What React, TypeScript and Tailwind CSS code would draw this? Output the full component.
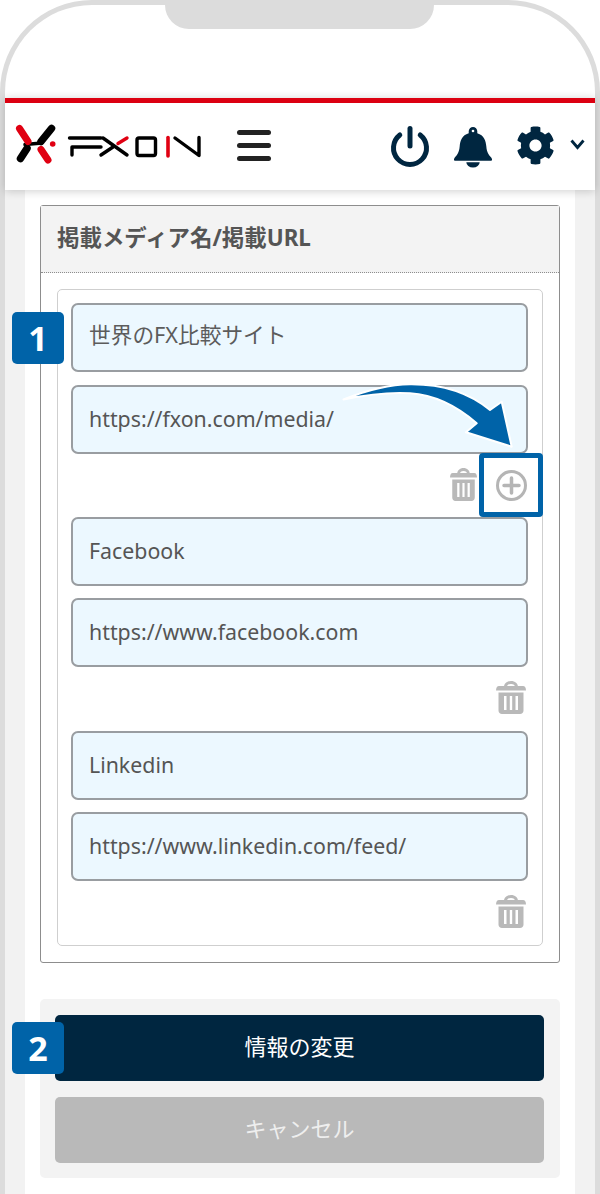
import { FaCog } from "react-icons/fa";

const font = { fontFamily: '"Noto Sans", "Noto Sans CJK JP", sans-serif' };

function Field({ value, cjk }: { value: string; cjk?: boolean }) {
  return (
    <div
      className={
        cjk
          ? "flex h-[69px] items-center rounded-[7px] border-2 border-[#999da1] bg-[#ecf8ff] pb-[5px] pl-[16px] text-[21.7px] text-[#5c5c5c]"
          : "flex h-[69px] items-center rounded-[7px] border-2 border-[#999da1] bg-[#ecf8ff] pb-[2px] pl-[16px] text-[21.33px] text-[#555]"
      }
    >
      {value}
    </div>
  );
}

function Trash({ small }: { small?: boolean }) {
  return (
    <svg
      className={small ? "-mt-[3px] h-[33px] w-[27px]" : "-mt-[3px] h-[33px] w-[30px]"}
      viewBox="0 0 30 33"
      preserveAspectRatio="none"
      fill="#b9b9b9"
    >
      <path d="M8 6 C8 2.5 11 0 15 0 C19 0 22 2.5 22 6 L19 6 C19 4 17.5 3 15 3 C12.5 3 11 4 11 6 Z" />
      <path d="M3 5 H27 C29 5 30 7 30 9.5 H0 C0 7 1 5 3 5 Z" />
      <path
        fillRule="evenodd"
        d="M2.5 11.5 H27.5 V29.5 C27.5 31.5 26 33 24 33 H6 C4 33 2.5 31.5 2.5 29.5 Z M8 15 V29 H10.5 V15 Z M13.8 15 V29 H16.2 V15 Z M19.5 15 V29 H22 V15 Z"
      />
    </svg>
  );
}

function Badge({ n, className }: { n: string; className: string }) {
  return (
    <div className={`absolute flex h-[52px] w-[52px] items-center justify-center rounded-[5px] bg-[#0063a8] text-[34px] font-bold text-white ${className}`}>
      {n}
    </div>
  );
}

function Logo() {
  return (
    <svg width="186" height="42" viewBox="0 0 186 42" fill="none" strokeLinecap="round" strokeLinejoin="round">
      <path d="M36.5 5.5 L26 18.5" stroke="#000" strokeWidth="7.5" />
      <path d="M5.5 35.5 L12 25.5" stroke="#000" strokeWidth="7.5" />
      <path d="M10 21.5 L27 20" stroke="#000" strokeWidth="3.5" />
      <path d="M4.5 5.5 L13 18.5" stroke="#e00012" strokeWidth="7" />
      <path d="M26 26.5 L33 37" stroke="#e00012" strokeWidth="7" />
      <circle cx="37.7" cy="21" r="2.8" fill="#e00012" />
      <g strokeWidth="3.4" stroke="#000">
        <path d="M54.5 15 H86" />
        <path d="M57 32 V24 H86" />
        <path d="M88 15 L112 32" />
        <path d="M86 32 L98 24" />
        <path d="M103 20.5 L112 15" stroke="#e00012" />
        <rect x="122" y="15" width="18.5" height="17.5" rx="2" />
        <path d="M153 14.5 V33" stroke="#e00012" strokeWidth="3.6" />
        <path d="M160 15 L184 32.5 V14.5" />
      </g>
    </svg>
  );
}

export default function App() {
  return (
    <div style={font} className="relative h-[1194px] w-[600px] overflow-hidden bg-white">
      <div className="h-[1194px] rounded-t-[92px] border-x-[5px] border-t-[5px] border-[#dcdcdc] bg-white">
        <div className="ml-[160px] h-[24px] w-[269px] rounded-b-[24px] bg-[#dcdcdc]" />
        <div className="h-[69px]" />
        <div className="relative z-10 shadow-[0_1px_9px_rgba(0,0,0,0.2)]">
          <div className="h-[5px] bg-[#dc0011]" />
          <header className="flex h-[87px] items-center bg-white pl-[10px] pr-[10px]">
            <div className="-mt-[5px]"><Logo /></div>
            <div className="ml-[36px] -mt-[3px] flex w-[34px] flex-col gap-[8px]">
              <span className="h-[5px] rounded-full bg-[#222]" />
              <span className="h-[5px] rounded-full bg-[#222]" />
              <span className="h-[5px] rounded-full bg-[#222]" />
            </div>
            <div className="ml-auto flex items-center">
              <svg width="40" height="42" viewBox="0 0 40 42" fill="none" stroke="#002640" strokeLinecap="round" strokeWidth="5">
                <path d="M9.8 9 A16.5 16.5 0 1 0 30.2 9" />
                <path d="M20 2.5 V20" />
              </svg>
              <svg className="ml-[23px]" width="40" height="42" viewBox="0 0 42 44" fill="#002640">
                <path d="M21 1 a4.5 4.5 0 0 1 4.5 4.5 v2 c7 2 9 8 9.5 14 c.4 6 2.5 9 5.5 12 q1 1.5 0 3 H1.5 q-1 -1.5 0 -3 c3 -3 5 -6 5.5 -12 c.5 -6 2.5 -12 9.5 -14 v-2 A4.5 4.5 0 0 1 21 1 Z" />
                <circle cx="21" cy="5.2" r="1.4" fill="#fff" />
                <path d="M14 38 H28 a7 5.5 0 0 1 -14 0 Z" />
              </svg>
              <FaCog className="ml-[23px] -mt-[3px] h-[39px] w-[39px] text-[#002640]" />
              <svg className="ml-[15px] -mt-[5px]" width="15" height="13" viewBox="0 0 15 13" fill="none" stroke="#002640" strokeWidth="2.8">
                <path d="M1.5 2.5 L7.5 9.5 L13.5 2.5" />
              </svg>
            </div>
          </header>
        </div>
        <main className="h-[1004px] bg-[#f2f2f2] pl-[20px] pr-[20px]">
          <div className="h-full bg-white pl-[15px] pr-[15px] pt-[15px]">
            <section className="rounded-[3px] border border-[#8d8d8d]">
              <h2 className="flex h-[67px] items-center border-b border-dotted border-[#8d8d8d] bg-[#f3f3f3] pb-[3px] pl-[16px] text-[22.44px] font-bold text-[#555]">
                掲載メディア名/掲載URL
              </h2>
              <div className="mx-[16px] mb-[16px] mt-[16px] rounded-[5px] border border-[#cfcfcf] pl-[13px] pt-[13px]">
                <div className="flex w-[457px] flex-col gap-[13px]">
                  <Field cjk value="世界のFX比較サイト" />
                  <Field value="https://fxon.com/media/" />
                </div>
                <div className="flex h-[63px] w-[457px] items-center justify-end gap-[19px] pr-[1px]">
                  <Trash small />
                  <svg width="31" height="31" viewBox="0 0 31 31" fill="none" stroke="#b5b5b5" strokeWidth="3">
                    <circle cx="15.5" cy="15.5" r="14" />
                    <path d="M15.5 8 V23 M8 15.5 H23" strokeWidth="3.5" strokeLinecap="round" />
                  </svg>
                </div>
                <div className="flex w-[457px] flex-col gap-[12px]">
                  <Field value="Facebook" />
                  <Field value="https://www.facebook.com" />
                </div>
                <div className="flex h-[64px] w-[457px] items-center justify-end pr-[2px]"><Trash /></div>
                <div className="flex w-[457px] flex-col gap-[12px]">
                  <Field value="Linkedin" />
                  <Field value="https://www.linkedin.com/feed/" />
                </div>
                <div className="flex h-[64px] w-[457px] items-center justify-end pr-[2px]"><Trash /></div>
              </div>
            </section>
            <section className="mt-[36px] flex flex-col gap-[16px] rounded-[5px] bg-[#f3f3f3] pb-[15px] pl-[15px] pr-[16px] pt-[16px]">
              <button className="h-[66px] w-full rounded-[5px] bg-[#002640] pb-[3px] text-[22px] text-white">情報の変更</button>
              <button className="h-[66px] w-full rounded-[5px] bg-[#b9b9b9] pb-[3px] text-[22px] text-[#eee]">キャンセル</button>
            </section>
          </div>
        </main>
      </div>
      <Badge n="1" className="left-[12px] top-[312px]" />
      <Badge n="2" className="left-[12px] top-[1022px]" />
      <div className="absolute left-[479px] top-[453px] h-[64px] w-[64px] rounded-[4px] border-[5px] border-[#0063a8]" />
      <svg className="absolute left-[340px] top-[380px]" width="180" height="70" viewBox="0 0 180 70">
        <path
          d="M3.5 19.5 C25 11 48 4.5 70 4.3 C100 4 128 12 150 30 L161.7 21.7 L171.7 66.7 L126 52.3 L136.7 43.3 C118 27 96 15 70 13.3 C48 12 25 15 3.5 19.5 Z"
          fill="#0063a8"
          stroke="#fff"
          strokeWidth="2"
          strokeLinejoin="round"
        />
      </svg>
    </div>
  );
}
